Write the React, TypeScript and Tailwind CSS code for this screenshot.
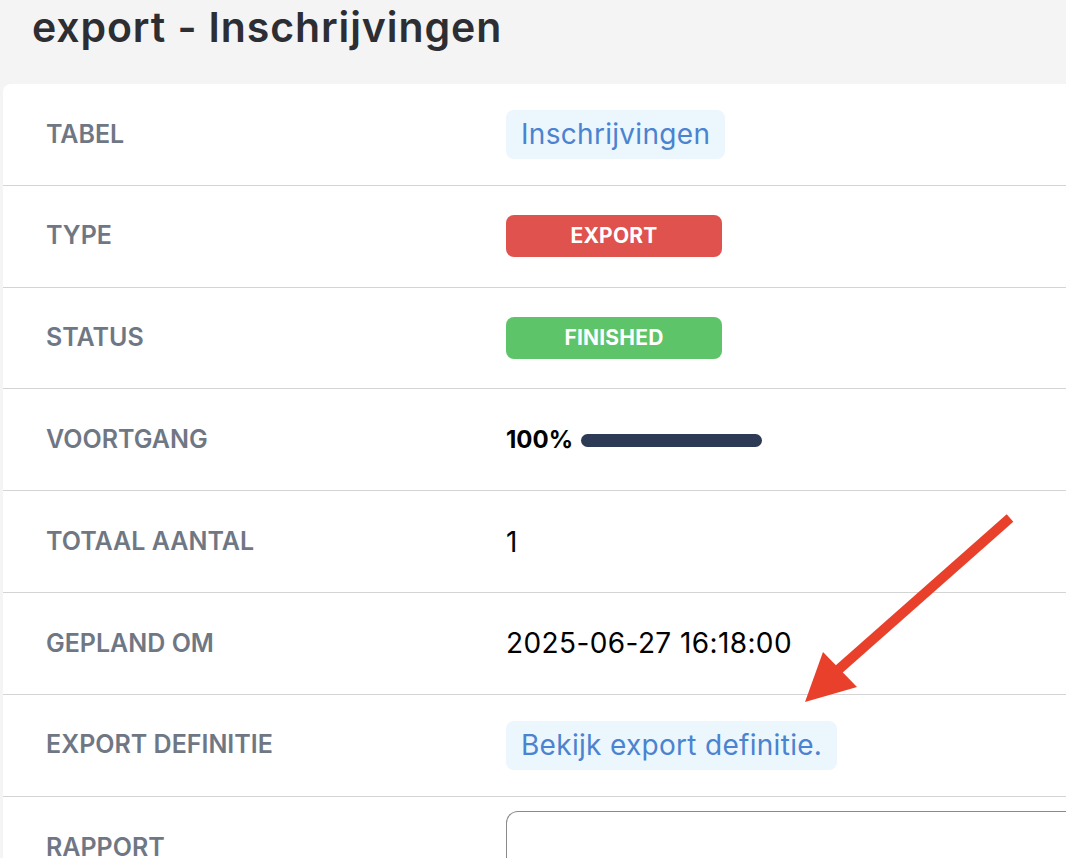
import React from 'react';

type Row = { label: string; value: React.ReactNode };

const Badge = ({ color, children }: { color: string; children: React.ReactNode }) => (
  <span
    className={`flex h-[42px] w-[216px] items-center justify-center rounded-lg text-[21px] font-bold uppercase tracking-[0.01em] text-white ${color}`}
  >
    {children}
  </span>
);

const LinkBadge = ({ children }: { children: React.ReactNode }) => (
  <span className="inline-flex h-[49px] items-center rounded-lg bg-[#ecf6fd] px-[15px] text-[28px] tracking-[0.3px] text-[#4a83cf]">
    {children}
  </span>
);

const rows: Row[] = [
  { label: 'Tabel', value: <LinkBadge>Inschrijvingen</LinkBadge> },
  { label: 'Type', value: <Badge color="bg-[#df524d]">Export</Badge> },
  { label: 'Status', value: <Badge color="bg-[#5ec46a]">Finished</Badge> },
  {
    label: 'Voortgang',
    value: (
      <div className="flex items-center gap-[8px]">
        <span className="text-[24px] font-bold text-black">100%</span>
        <div className="mt-[2px] h-[13px] w-[181px] rounded-full bg-[#2d3a55]" />
      </div>
    ),
  },
  { label: 'Totaal aantal', value: <span className="text-[28px] text-black">1</span> },
  {
    label: 'Gepland om',
    value: <span className="text-[28px] tracking-[0.4px] text-black">2025-06-27 16:18:00</span>,
  },
  { label: 'Export definitie', value: <LinkBadge>Bekijk export definitie.</LinkBadge> },
];

export default function App() {
  return (
    <div className="relative h-[858px] w-[1066px] overflow-hidden bg-[#f4f4f4] font-['Inter',sans-serif]">
      <h1 className="h-[84px] pl-[32px] pt-[3px] text-[41px] font-semibold leading-[48px] tracking-[0.9px] text-[#2d2e33]">
        export - Inschrijvingen
      </h1>
      <div className="ml-[3px] rounded-tl-lg bg-white">
        {rows.map((r) => (
          <div key={r.label} className="grid h-[101.8px] grid-cols-[503px_1fr] items-center border-b border-[#d4d4d4]">
            <div className="pl-[43px] text-[25px] font-semibold uppercase text-[#707784]">{r.label}</div>
            <div className="flex items-center">{r.value}</div>
          </div>
        ))}
        <div className="grid h-[62px] grid-cols-[503px_1fr]">
          <div className="pl-[43px] pt-[35px] text-[25px] font-semibold uppercase leading-[30px] text-[#707784]">
            Rapport
          </div>
          <div className="pt-[14px]">
            <div className="h-[60px] rounded-tl-xl border-l border-t border-[#8a8a8a]" />
          </div>
        </div>
      </div>
      <svg className="pointer-events-none absolute left-0 top-0" width="1066" height="858" viewBox="0 0 1066 858">
        <line x1="1010" y1="518" x2="838" y2="670" stroke="#e8402a" strokeWidth="10" />
        <polygon points="805,702 823,652 857,687" fill="#e8402a" />
      </svg>
    </div>
  );
}
